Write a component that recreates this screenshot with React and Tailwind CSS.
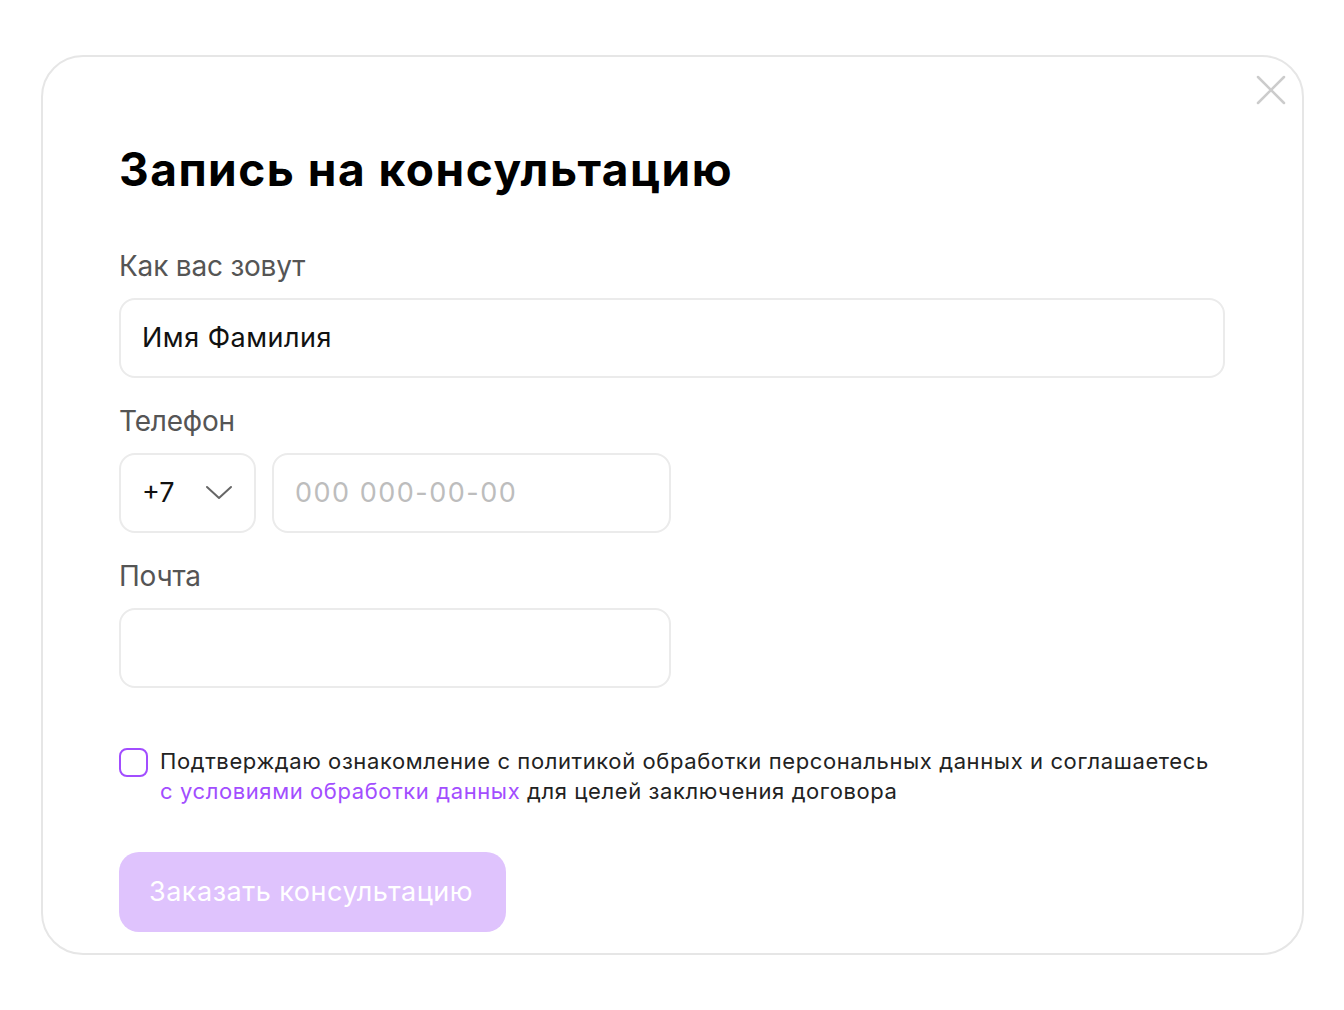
import { useState } from 'react'

function App() {
  const [agree, setAgree] = useState(false)

  return (
    <div className="min-h-screen bg-white px-[41px] pt-[55px]" style={{ fontFamily: 'Inter, "Noto Sans", sans-serif' }}>
      <div className="relative w-[1263px] h-[900px] rounded-[42px] border-2 border-[#e6e6e6] bg-white pl-[76px] pt-[84px]">
        {/* Close */}
        <button className="absolute right-[16px] top-[18px] w-[30px] h-[30px] flex items-center justify-center text-[#cccccc]">
          <svg width="30" height="30" viewBox="0 0 30 30" fill="none" stroke="currentColor" strokeWidth="2.5" strokeLinecap="round">
            <path d="M2 2L28 28M28 2L2 28" />
          </svg>
        </button>

        <h1 className="text-[46px] leading-[56px] font-bold text-black tracking-[1.5px]">Запись на консультацию</h1>

        {/* Name */}
        <label className="block mt-[53px] text-[28px] leading-[32px] text-[#555555] tracking-[-0.2px]">Как вас зовут</label>
        <div className="mt-[16px] w-[1106px] h-[80px] rounded-[16px] border-2 border-[#ebebeb] flex items-center px-[21px]">
          <span className="text-[27px] text-[#111111] tracking-[0.5px]">Имя Фамилия</span>
        </div>

        {/* Phone */}
        <label className="block mt-[27px] text-[28px] leading-[32px] text-[#555555] tracking-[-0.2px]">Телефон</label>
        <div className="mt-[16px] flex gap-[16px]">
          <div className="w-[137px] h-[80px] rounded-[16px] border-2 border-[#ebebeb] flex items-center pl-[21px] gap-[30px]">
            <span className="text-[27px] text-[#111111]">+7</span>
            <svg width="28" height="16" viewBox="0 0 28 16" fill="none" stroke="#666666" strokeWidth="2" strokeLinecap="round" strokeLinejoin="round">
              <path d="M2 2L14 13L26 2" />
            </svg>
          </div>
          <div className="w-[399px] h-[80px] rounded-[16px] border-2 border-[#ebebeb] flex items-center px-[21px]">
            <span className="text-[27px] text-[#bdbdbd] tracking-[1.5px]">000 000-00-00</span>
          </div>
        </div>

        {/* Email */}
        <label className="block mt-[27px] text-[28px] leading-[32px] text-[#555555] tracking-[-0.2px]">Почта</label>
        <div className="mt-[16px] w-[552px] h-[80px] rounded-[16px] border-2 border-[#ebebeb]" />

        {/* Consent */}
        <div className="mt-[58px] flex items-start gap-[12px]">
          <button
            onClick={() => setAgree(!agree)}
            className="mt-[2px] shrink-0 w-[29px] h-[29px] rounded-[8px] border-[2.5px] border-[#a24dff]"
          />
          <p className="text-[22px] leading-[30px] text-[#222222] tracking-[0.6px] whitespace-nowrap">
            Подтверждаю ознакомление с политикой обработки персональных данных и соглашаетесь
            <br />
            <span className="text-[#a24dff]">с условиями обработки данных</span> для целей заключения договора
          </p>
        </div>

        {/* Submit */}
        <button className="mt-[46px] w-[387px] h-[80px] rounded-[20px] bg-[#dfc3fd] flex items-center pl-[30px]">
          <span className="text-[27px] text-white tracking-[0.5px]">Заказать консультацию</span>
        </button>
      </div>
    </div>
  )
}

export default App
